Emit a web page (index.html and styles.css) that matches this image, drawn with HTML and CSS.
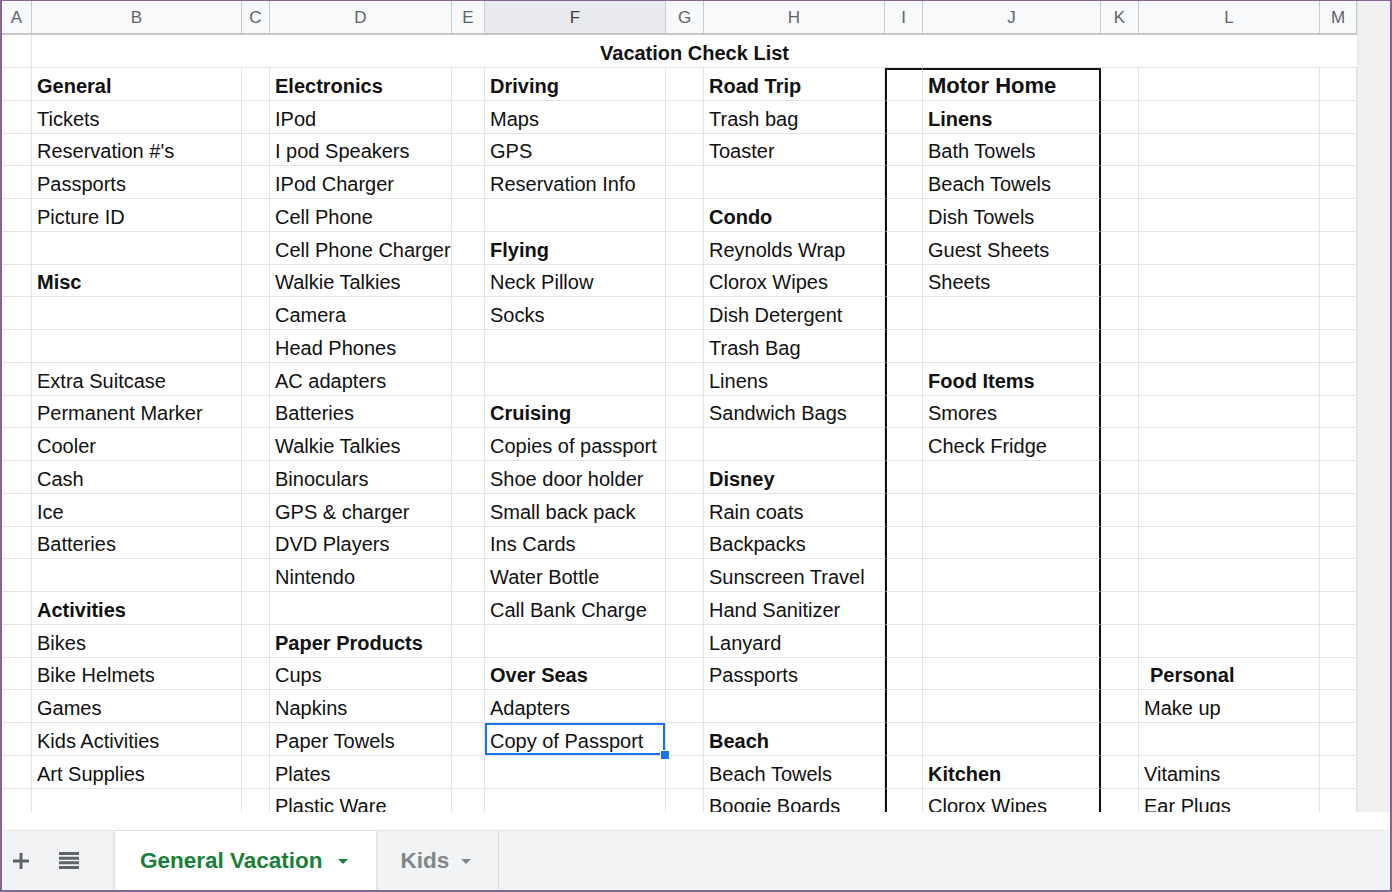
FILE: index.html
```html
<!DOCTYPE html>
<html>
<head>
<meta charset="UTF-8">
<title>Vacation Check List</title>
<link rel="stylesheet" href="styles.css">
</head>
<body>
<div class="frame">

<div class="grid-area">
  <div class="sheet">
    <div class="row heads">
      <div class="h">A</div><div class="h">B</div><div class="h">C</div><div class="h">D</div><div class="h">E</div>
      <div class="h sel">F</div><div class="h">G</div><div class="h">H</div><div class="h">I</div><div class="h">J</div>
      <div class="h">K</div><div class="h">L</div><div class="h">M</div>
    </div>

    <div class="row title-row">
      <div class="c"></div>
      <div class="c title">Vacation Check List</div>
    </div>

    <div class="row">
      <div class="c"></div><div class="c b">General</div><div class="c"></div><div class="c b">Electronics</div><div class="c"></div>
      <div class="c b">Driving</div><div class="c"></div><div class="c b">Road Trip</div><div class="c bx-l bx-t"></div><div class="c b big bx-r bx-t">Motor Home</div>
      <div class="c"></div><div class="c"></div><div class="c"></div>
    </div>
    <div class="row">
      <div class="c"></div><div class="c">Tickets</div><div class="c"></div><div class="c">IPod</div><div class="c"></div>
      <div class="c">Maps</div><div class="c"></div><div class="c">Trash bag</div><div class="c bx-l"></div><div class="c b bx-r">Linens</div>
      <div class="c"></div><div class="c"></div><div class="c"></div>
    </div>
    <div class="row">
      <div class="c"></div><div class="c">Reservation #'s</div><div class="c"></div><div class="c">I pod Speakers</div><div class="c"></div>
      <div class="c">GPS</div><div class="c"></div><div class="c">Toaster</div><div class="c bx-l"></div><div class="c bx-r">Bath Towels</div>
      <div class="c"></div><div class="c"></div><div class="c"></div>
    </div>
    <div class="row">
      <div class="c"></div><div class="c">Passports</div><div class="c"></div><div class="c">IPod Charger</div><div class="c"></div>
      <div class="c">Reservation Info</div><div class="c"></div><div class="c"></div><div class="c bx-l"></div><div class="c bx-r">Beach Towels</div>
      <div class="c"></div><div class="c"></div><div class="c"></div>
    </div>
    <div class="row">
      <div class="c"></div><div class="c">Picture ID</div><div class="c"></div><div class="c">Cell Phone</div><div class="c"></div>
      <div class="c"></div><div class="c"></div><div class="c b">Condo</div><div class="c bx-l"></div><div class="c bx-r">Dish Towels</div>
      <div class="c"></div><div class="c"></div><div class="c"></div>
    </div>
    <div class="row">
      <div class="c"></div><div class="c"></div><div class="c"></div><div class="c">Cell Phone Charger</div><div class="c"></div>
      <div class="c b">Flying</div><div class="c"></div><div class="c">Reynolds Wrap</div><div class="c bx-l"></div><div class="c bx-r">Guest Sheets</div>
      <div class="c"></div><div class="c"></div><div class="c"></div>
    </div>
    <div class="row">
      <div class="c"></div><div class="c b">Misc</div><div class="c"></div><div class="c">Walkie Talkies</div><div class="c"></div>
      <div class="c">Neck Pillow</div><div class="c"></div><div class="c">Clorox Wipes</div><div class="c bx-l"></div><div class="c bx-r">Sheets</div>
      <div class="c"></div><div class="c"></div><div class="c"></div>
    </div>
    <div class="row">
      <div class="c"></div><div class="c"></div><div class="c"></div><div class="c">Camera</div><div class="c"></div>
      <div class="c">Socks</div><div class="c"></div><div class="c">Dish Detergent</div><div class="c bx-l"></div><div class="c bx-r"></div>
      <div class="c"></div><div class="c"></div><div class="c"></div>
    </div>
    <div class="row">
      <div class="c"></div><div class="c"></div><div class="c"></div><div class="c">Head Phones</div><div class="c"></div>
      <div class="c"></div><div class="c"></div><div class="c">Trash Bag</div><div class="c bx-l"></div><div class="c bx-r"></div>
      <div class="c"></div><div class="c"></div><div class="c"></div>
    </div>
    <div class="row">
      <div class="c"></div><div class="c">Extra Suitcase</div><div class="c"></div><div class="c">AC adapters</div><div class="c"></div>
      <div class="c"></div><div class="c"></div><div class="c">Linens</div><div class="c bx-l"></div><div class="c b bx-r">Food Items</div>
      <div class="c"></div><div class="c"></div><div class="c"></div>
    </div>
    <div class="row">
      <div class="c"></div><div class="c">Permanent Marker</div><div class="c"></div><div class="c">Batteries</div><div class="c"></div>
      <div class="c b">Cruising</div><div class="c"></div><div class="c">Sandwich Bags</div><div class="c bx-l"></div><div class="c bx-r">Smores</div>
      <div class="c"></div><div class="c"></div><div class="c"></div>
    </div>
    <div class="row">
      <div class="c"></div><div class="c">Cooler</div><div class="c"></div><div class="c">Walkie Talkies</div><div class="c"></div>
      <div class="c">Copies of passport</div><div class="c"></div><div class="c"></div><div class="c bx-l"></div><div class="c bx-r">Check Fridge</div>
      <div class="c"></div><div class="c"></div><div class="c"></div>
    </div>
    <div class="row">
      <div class="c"></div><div class="c">Cash</div><div class="c"></div><div class="c">Binoculars</div><div class="c"></div>
      <div class="c">Shoe door holder</div><div class="c"></div><div class="c b">Disney</div><div class="c bx-l"></div><div class="c bx-r"></div>
      <div class="c"></div><div class="c"></div><div class="c"></div>
    </div>
    <div class="row">
      <div class="c"></div><div class="c">Ice</div><div class="c"></div><div class="c">GPS &amp; charger</div><div class="c"></div>
      <div class="c">Small back pack</div><div class="c"></div><div class="c">Rain coats</div><div class="c bx-l"></div><div class="c bx-r"></div>
      <div class="c"></div><div class="c"></div><div class="c"></div>
    </div>
    <div class="row">
      <div class="c"></div><div class="c">Batteries</div><div class="c"></div><div class="c">DVD Players</div><div class="c"></div>
      <div class="c">Ins Cards</div><div class="c"></div><div class="c">Backpacks</div><div class="c bx-l"></div><div class="c bx-r"></div>
      <div class="c"></div><div class="c"></div><div class="c"></div>
    </div>
    <div class="row">
      <div class="c"></div><div class="c"></div><div class="c"></div><div class="c">Nintendo</div><div class="c"></div>
      <div class="c">Water Bottle</div><div class="c"></div><div class="c">Sunscreen Travel</div><div class="c bx-l"></div><div class="c bx-r"></div>
      <div class="c"></div><div class="c"></div><div class="c"></div>
    </div>
    <div class="row">
      <div class="c"></div><div class="c b">Activities</div><div class="c"></div><div class="c"></div><div class="c"></div>
      <div class="c">Call Bank Charge</div><div class="c"></div><div class="c">Hand Sanitizer</div><div class="c bx-l"></div><div class="c bx-r"></div>
      <div class="c"></div><div class="c"></div><div class="c"></div>
    </div>
    <div class="row">
      <div class="c"></div><div class="c">Bikes</div><div class="c"></div><div class="c b">Paper Products</div><div class="c"></div>
      <div class="c"></div><div class="c"></div><div class="c">Lanyard</div><div class="c bx-l"></div><div class="c bx-r"></div>
      <div class="c"></div><div class="c"></div><div class="c"></div>
    </div>
    <div class="row">
      <div class="c"></div><div class="c">Bike Helmets</div><div class="c"></div><div class="c">Cups</div><div class="c"></div>
      <div class="c b">Over Seas</div><div class="c"></div><div class="c">Passports</div><div class="c bx-l"></div><div class="c bx-r"></div>
      <div class="c"></div><div class="c b indent">Personal</div><div class="c"></div>
    </div>
    <div class="row">
      <div class="c"></div><div class="c">Games</div><div class="c"></div><div class="c">Napkins</div><div class="c"></div>
      <div class="c">Adapters</div><div class="c"></div><div class="c"></div><div class="c bx-l"></div><div class="c bx-r"></div>
      <div class="c"></div><div class="c">Make up</div><div class="c"></div>
    </div>
    <div class="row">
      <div class="c"></div><div class="c">Kids Activities</div><div class="c"></div><div class="c">Paper Towels</div><div class="c"></div>
      <div class="c active">Copy of Passport</div><div class="c"></div><div class="c b">Beach</div><div class="c bx-l"></div><div class="c bx-r"></div>
      <div class="c"></div><div class="c"></div><div class="c"></div>
    </div>
    <div class="row">
      <div class="c"></div><div class="c">Art Supplies</div><div class="c"></div><div class="c">Plates</div><div class="c"></div>
      <div class="c"></div><div class="c"></div><div class="c">Beach Towels</div><div class="c bx-l"></div><div class="c b bx-r">Kitchen</div>
      <div class="c"></div><div class="c">Vitamins</div><div class="c"></div>
    </div>
    <div class="row">
      <div class="c"></div><div class="c"></div><div class="c"></div><div class="c">Plastic Ware</div><div class="c"></div>
      <div class="c"></div><div class="c"></div><div class="c">Boogie Boards</div><div class="c bx-l"></div><div class="c bx-r">Clorox Wipes</div>
      <div class="c"></div><div class="c">Ear Plugs</div><div class="c"></div>
    </div>
  </div>
  <div class="filler"></div>
</div>

<div class="gap"></div>

<div class="tabbar">
  <div class="tool">
    <svg width="18" height="18" viewBox="0 0 18 18"><path d="M9 1v16M1 9h16" stroke="#5f6368" stroke-width="3" fill="none"/></svg>
  </div>
  <div class="tool">
    <svg width="20" height="17" viewBox="0 0 20 17"><path d="M0 1.5h20M0 6.2h20M0 10.8h20M0 15.5h20" stroke="#5f6368" stroke-width="3" fill="none"/></svg>
  </div>
  <div class="tab on">General Vacation <span class="caret"></span></div>
  <div class="tab">Kids <span class="caret"></span></div>
</div>

</div>
</body>
</html>
```

FILE: styles.css
```css
body {
  margin: 0;
  font-family: "Liberation Sans", Arial, sans-serif;
  background: #fff;
}

.frame {
  width: 1392px;
  height: 892px;
  box-sizing: border-box;
  border: 2px solid #86639a;
  border-top-width: 1px;
  display: flex;
  flex-direction: column;
  overflow: hidden;
}

/* grid */
.grid-area { display: flex; height: 811px; overflow: hidden; flex: none; }
.sheet { width: 1355px; flex: none; }
.filler { flex: 1; background: #f1f1f2; border-left: 1px solid #e3e3e3; }

.row {
  display: grid;
  grid-template-columns: 30px 210px 28px 182px 33px 181px 38px 181px 38px 178px 38px 181px 37px;
  height: 32.75px;
  box-sizing: border-box;
}

.heads { height: 34px; background: #f8f9fa; border-bottom: 2px solid #c4c7c5; }
.h {
  border-right: 1px solid #c9cbcd;
  color: #5f6368;
  font-size: 17px;
  display: flex;
  align-items: center;
  justify-content: center;
  padding-top: 1px;
}
.h.sel { background: #e8eaed; color: #3c4043; }

.title-row { height: 33px; grid-template-columns: 30px 1fr; }

.c {
  box-sizing: border-box;
  border-right: 1px solid #e2e3e3;
  border-bottom: 1px solid #e2e3e3;
  font-size: 20px;
  color: #111;
  padding: 0 0 2px 5px;
  display: flex;
  align-items: flex-end;
  white-space: nowrap;
  position: relative;
}
.c.b { font-weight: bold; }
.c.big { font-size: 22px; padding-bottom: 1px; }
.c.indent { padding-left: 11px; }
.title { justify-content: center; font-weight: bold; padding-left: 0; border-right: 0; }

/* the box round columns I and J */
.bx-l { border-left: 2px solid #111; }
.bx-r { border-right: 2px solid #111; }
.bx-t { border-top: 2px solid #111; }

.active { box-shadow: inset 0 0 0 2px #1a73e8; }
.active::after {
  content: "";
  position: absolute;
  right: -5px;
  bottom: -5px;
  width: 8px;
  height: 8px;
  background: #1a73e8;
  border: 1px solid #fff;
  z-index: 2;
}

.gap { height: 18px; flex: none; }

/* sheet tabs */
.tabbar {
  flex: 1;
  background: #f1f3f4;
  border-top: 1px solid #e6e6e6;
  display: flex;
  align-items: stretch;
}
.tool { width: 48px; display: flex; align-items: center; justify-content: center; margin-left: -5px; }
.tool + .tool { margin-left: 0; }
.tab {
  display: flex;
  align-items: center;
  padding: 0 27px 0 25px;
  font-size: 22.5px;
  font-weight: bold;
  color: #80868b;
  border-right: 1px solid #dadce0;
}
.tab.on {
  background: #fff;
  color: #188038;
  margin-left: 22px;
  padding: 0 28px 0 25px;
  box-shadow: 0 1px 3px rgba(60,64,67,.25);
  border-right: 0;
}
.caret {
  display: inline-block;
  width: 0;
  height: 0;
  border-left: 5px solid transparent;
  border-right: 5px solid transparent;
  border-top: 5px solid currentColor;
  margin-left: 15px;
  margin-top: 2px;
}
.tab:not(.on) .caret { border-top-color: #80868b; margin-left: 12px; }
```
